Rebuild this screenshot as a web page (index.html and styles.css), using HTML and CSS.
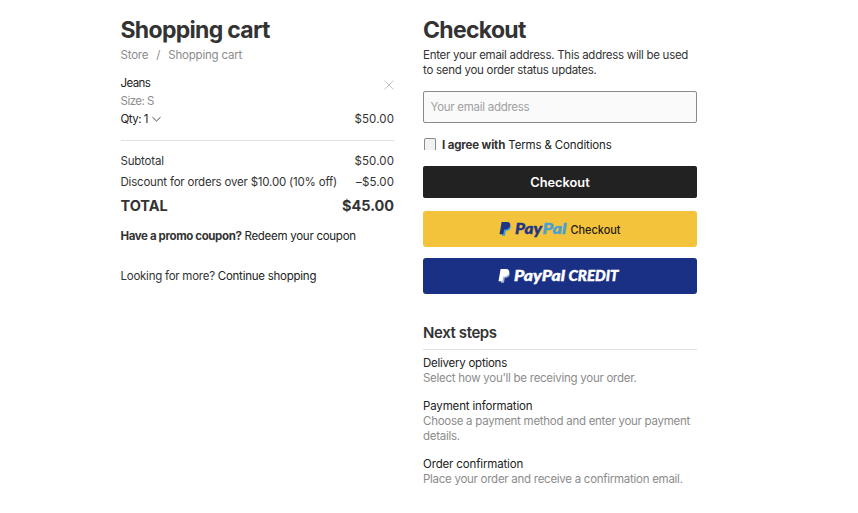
FILE: index.html
```html
<!DOCTYPE html>
<html lang="en">
<head>
    <meta charset="UTF-8">
    <meta name="viewport" content="width=device-width, initial-scale=1.0">
    <title>Shopping cart</title>
    <link rel="stylesheet" href="styles.css">
</head>
<body>
    <div class="page">
        <!-- Cart contents and totals -->
        <section class="cart">
            <h1>Shopping cart</h1>
            <nav class="breadcrumbs">
                <a href="#">Store</a>
                <span>/</span>
                <a href="#">Shopping cart</a>
            </nav>

            <div class="product">
                <div class="product-row">
                    <a href="#" class="product-name">Jeans</a>
                    <button class="remove" type="button" aria-label="Remove item">
                        <svg width="10" height="10" viewBox="0 0 10 10"><path d="M0.5 0.5L9.5 9.5M9.5 0.5L0.5 9.5" fill="none" stroke="#bdbdbd" stroke-width="0.9"/></svg>
                    </button>
                </div>
                <div class="product-row size">Size: S</div>
                <div class="product-row">
                    <span class="qty">Qty: 1
                        <svg width="9" height="6" viewBox="0 0 9 6"><path d="M0.5 1.2L4.500 5L8.500 1.2" fill="none" stroke="#444" stroke-width="1"/></svg>
                    </span>
                    <span class="price">$50.00</span>
                </div>
            </div>

            <div class="totals">
                <div class="totals-row"><span class="subtotal">Subtotal</span><span class="price">$50.00</span></div>
                <div class="totals-row"><span class="discount">Discount for orders over $10.00 (10% off)</span><span class="price">–$5.00</span></div>
                <div class="totals-row total"><span>TOTAL</span><span>$45.00</span></div>
            </div>

            <p class="coupon"><b>Have a promo coupon?</b> <a href="#">Redeem your coupon</a></p>
            <p class="more">Looking for more? <a href="#">Continue shopping</a></p>
        </section>

        <!-- Email form and payment buttons -->
        <section class="checkout">
            <h1>Checkout</h1>
            <p class="intro">Enter your email address. This address will be used to send you order status updates.</p>
            <input class="email" type="email" placeholder="Your email address">
            <label class="agree">
                <span class="checkbox"></span>
                <span><b>I agree with</b> <a href="#">Terms &amp; Conditions</a></span>
            </label>

            <button class="btn btn-checkout" type="button">Checkout</button>
            <button class="btn btn-paypal" type="button">
                <svg width="124" height="20" viewBox="0 0 124 20">
                    <path d="M5 5.500H11C13.400 6.300 13.200 9.500 11 11C9.800 11.800 8.400 11.800 7.800 11.800L7 16.800H3.800Z" fill="#3f9ddb"/>
                    <path d="M3.600 3H9C11.800 3 12.800 4.800 12 7.200C11.200 9.600 9.200 10.600 6.200 10.600L5.300 15.300H1.500Z" fill="#1f3685"/>
                    <text class="wordmark wordmark-dark" x="17" y="15" textLength="27" lengthAdjust="spacingAndGlyphs">Pay</text>
                    <text class="wordmark wordmark-light" x="44.500" y="15" textLength="24" lengthAdjust="spacingAndGlyphs">Pal</text>
                    <text class="wordmark-label" x="72.500" y="15" textLength="50" lengthAdjust="spacingAndGlyphs">Checkout</text>
                </svg>
            </button>
            <button class="btn btn-credit" type="button">
                <svg width="124" height="20" viewBox="0 0 124 20">
                    <path d="M4 5.500H10C12.400 6.300 12.200 9.500 10 11C8.800 11.800 7.400 11.800 6.800 11.800L6 16.800H2.800Z" fill="#a9b4da"/>
                    <path d="M2.600 3H8C10.800 3 11.800 4.800 11 7.200C10.200 9.600 8.200 10.600 5.200 10.600L4.300 15.300H0.500Z" fill="#fff"/>
                    <text class="wordmark wordmark-white" x="16" y="15" textLength="51" lengthAdjust="spacingAndGlyphs">PayPal</text>
                    <text class="wordmark wordmark-white" x="70.500" y="15" textLength="50" lengthAdjust="spacingAndGlyphs">CREDIT</text>
                </svg>
            </button>

            <h2>Next steps</h2>
            <dl class="steps">
                <dt class="delivery">Delivery options</dt>
                <dd>Select how you'll be receiving your order.</dd>
                <dt>Payment information</dt>
                <dd>Choose a payment method and enter your payment details.</dd>
                <dt>Order confirmation</dt>
                <dd>Place your order and receive a confirmation email.</dd>
            </dl>
        </section>
    </div>
</body>
</html>
```
FILE: styles.css
```css
* {
    box-sizing: border-box;
}

body {
    margin: 0;
    background-color: #fff;
    color: #333;
    font-family: Inter, Arial, sans-serif;
    font-size: 11.5px;
    line-height: 15px;
    letter-spacing: -0.27px;
}

a {
    color: #222;
    text-decoration: none;
}

p,
dl,
dd {
    margin: 0;
}

button {
    padding: 0;
    border: none;
    font-family: inherit;
    cursor: pointer;
}

svg {
    display: block;
}

/* Two columns: cart on the left, checkout on the right */
.page {
    display: grid;
    grid-template-columns: 273.5px 274px;
    column-gap: 29px;
    padding: 15px 0 0 120.5px;
}

h1 {
    margin: 0;
    font-size: 23px;
    line-height: 30px;
    font-weight: 700;
    letter-spacing: -0.7px;
}

/* Cart column */
.breadcrumbs {
    display: flex;
    gap: 8px;
    margin-top: 2px;
    line-height: 16px;
    letter-spacing: -0.2px;
}

.breadcrumbs a,
.breadcrumbs span,
.size {
    color: #8c8c8c;
}

.product {
    margin-top: 11px;
    padding-bottom: 12px;
    border-bottom: 1px solid #e0e0e0;
}

.product-row {
    display: flex;
    justify-content: space-between;
    align-items: center;
    height: 18px;
}

.product-name {
    letter-spacing: -0.6px;
}

.size {
    letter-spacing: -0.5px;
}

.remove {
    background: none;
    padding-top: 3px;
}

.qty {
    display: flex;
    align-items: center;
    gap: 4px;
    color: #222;
    letter-spacing: -0.5px;
}

.price {
    letter-spacing: 0.1px;
}

.totals {
    padding-top: 10px;
}

.totals-row {
    display: flex;
    justify-content: space-between;
    line-height: 21px;
}

.subtotal,
.discount {
    letter-spacing: -0.2px;
}

.total {
    font-size: 14.5px;
    font-weight: 700;
    line-height: 26px;
    letter-spacing: -0.05px;
}

.coupon {
    margin-top: 10px;
}

.coupon b {
    letter-spacing: -0.38px;
}

.more {
    margin-top: 25px;
    letter-spacing: -0.25px;
}

/* Checkout column */
.intro {
    margin-top: 3px;
}

.email {
    display: block;
    width: 100%;
    height: 32px;
    margin-top: 13px;
    padding: 0 6.5px;
    border: 1px solid #8a8a8a;
    border-radius: 2px;
    background-color: #fafafa;
    font: inherit;
    letter-spacing: inherit;
}

.email::placeholder {
    color: #a0a0a0;
}

.agree {
    display: flex;
    align-items: center;
    gap: 6px;
    height: 15px;
    margin: 15px 0 0 1px;
    letter-spacing: -0.15px;
}

/* The box has no bottom edge */
.checkbox {
    width: 12px;
    height: 12px;
    margin-bottom: 3px;
    border: 1px solid #8a8a8a;
    border-bottom: none;
    border-radius: 2px 2px 0 0;
    background-color: #f2f2f2;
}

.btn {
    display: flex;
    align-items: center;
    justify-content: center;
    width: 100%;
    border-radius: 3px;
}

.btn-checkout {
    height: 32px;
    margin-top: 13px;
    background-color: #222;
    color: #fff;
    font-size: 12.8px;
    font-weight: 600;
    border-radius: 2px;
}

.btn-paypal {
    height: 36px;
    margin-top: 13px;
    background-color: #f4c33c;
}

.btn-credit {
    height: 36px;
    margin-top: 11px;
    background-color: #1a3085;
}

.wordmark {
    font: italic 900 15.5px Lato, sans-serif;
    stroke-width: 0.4px;
}

.wordmark-dark {
    fill: #1f3685;
    stroke: #1f3685;
}

.wordmark-light {
    fill: #4aa0d0;
    stroke: #4aa0d0;
}

.wordmark-white {
    fill: #fff;
    stroke: #fff;
}

.wordmark-label {
    fill: #1c1a14;
    font: 500 11.2px Inter, Arial, sans-serif;
}

/* Next steps */
h2 {
    margin: 29px 0 0;
    padding-bottom: 6px;
    border-bottom: 1px solid #e0e0e0;
    font-size: 15px;
    line-height: 20px;
    font-weight: 600;
    letter-spacing: -0.4px;
}

.steps dt {
    margin-top: 13px;
    color: #222;
    letter-spacing: -0.15px;
}

.steps .delivery {
    margin-top: 6px;
    letter-spacing: -0.25px;
}

.steps dd {
    color: #8c8c8c;
}
```
